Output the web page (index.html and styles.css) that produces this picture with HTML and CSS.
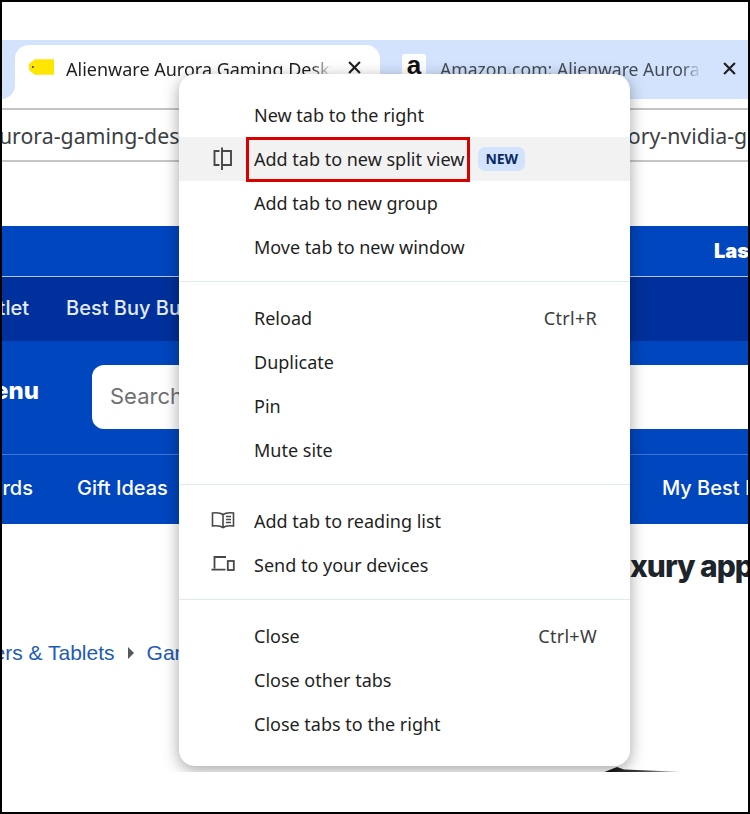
FILE: index.html
```html
<!DOCTYPE html>
<html lang="en">
<head>
<meta charset="utf-8">
<title>Chrome tab context menu</title>
<link rel="stylesheet" href="styles.css">
</head>
<body>
<div class="frame">
  <div class="page">
    <div class="top-gap"></div>
    <div class="tabstrip">
      <div class="tab tab-active">
        <svg class="favicon-tag" viewBox="0 0 26 16"><path d="M6 0H26V16H6L0 11V5Z" fill="#ffe600"/><circle cx="4" cy="8" r="1" fill="#333"/></svg>
        <span class="tab-title">Alienware Aurora Gaming Desktop</span>
        <svg class="tab-close" viewBox="0 0 12 12"><path d="M1 1L11 11M11 1L1 11" stroke="#1f1f1f" stroke-width="2"/></svg>
      </div>
      <div class="tab tab-other">
        <span class="favicon-a">a</span>
        <span class="tab-title tab-title-other">Amazon.com: Alienware Aurora Gaming</span>
        <svg class="tab-close" viewBox="0 0 12 12"><path d="M1 1L11 11M11 1L1 11" stroke="#1f1f1f" stroke-width="2"/></svg>
      </div>
    </div>
    <div class="omni-gap"></div>
    <div class="urlbar">
      <span class="url-left">aurora-gaming-des</span>
      <span class="url-right">ory-nvidia-geforce</span>
    </div>
    <div class="site-gap"></div>
    <div class="promo">
      <span class="promo-text">Last</span>
    </div>
    <div class="subnav">
      <span class="subnav-a">Outlet</span>
      <span class="subnav-b">Best Buy Business</span>
    </div>
    <div class="searchrow">
      <span class="menu-word">Menu</span>
      <div class="searchbox">Search Best Buy</div>
    </div>
    <div class="mainnav">
      <span class="nav-a">Cards</span>
      <span class="nav-b">Gift Ideas</span>
      <span class="nav-c">My Best Buy</span>
    </div>
    <div class="content">
      <div class="headline">xury app</div>
      <div class="crumbs">
        <span>Computers &amp; Tablets</span>
        <svg class="crumb-arrow" viewBox="0 0 6 12"><path d="M0 0L6 6L0 12Z" fill="#55585c"/></svg>
        <span>Gaming</span>
      </div>
      <svg class="product" viewBox="0 0 92 6">
        <defs>
          <linearGradient id="productFade" x1="0" x2="1" y1="0" y2="0">
            <stop offset="0" stop-color="#0d0d0d"/>
            <stop offset="0.45" stop-color="#444"/>
            <stop offset="1" stop-color="#e0e0e0"/>
          </linearGradient>
        </defs>
        <path d="M2 6L12 2L17 0L24 2.500L50 3.500L92 5.500V6Z" fill="url(#productFade)"/>
      </svg>
    </div>

    <div class="menu">
      <div class="group">
        <div class="row"><span class="label">New tab to the right</span></div>
        <div class="row row-hover">
          <svg class="icon" viewBox="0 0 20 24"><path d="M6.500 4H1.500V18H6.500M9 4H18V18H9M9 0.500V23" fill="none" stroke="#474747" stroke-width="1.900"/></svg>
          <span class="label">Add tab to new split view</span>
          <span class="badge">NEW</span>
          <span class="redbox"></span>
        </div>
        <div class="row"><span class="label">Add tab to new group</span></div>
        <div class="row"><span class="label">Move tab to new window</span></div>
      </div>
      <div class="sep"></div>
      <div class="group">
        <div class="row"><span class="label">Reload</span><span class="key">Ctrl+R</span></div>
        <div class="row"><span class="label">Duplicate</span></div>
        <div class="row"><span class="label">Pin</span></div>
        <div class="row"><span class="label">Mute site</span></div>
      </div>
      <div class="sep"></div>
      <div class="group">
        <div class="row">
          <svg class="icon icon-wide" viewBox="0 0 24 18"><path d="M12 3.500C10 2 6 1.500 1.500 2V15C6 14.500 10 15 12 16.500C14 15 18 14.500 22.500 15V2C18 1.500 14 2 12 3.500V16.500M15 5.500H20M15 8.500H20M15 11.500H20" fill="none" stroke="#474747" stroke-width="1.600"/></svg>
          <span class="label">Add tab to reading list</span>
        </div>
        <div class="row">
          <svg class="icon icon-wide" viewBox="0 0 24 18"><path d="M15 2H3.500V13.500M0.500 14.700H14.500" fill="none" stroke="#474747" stroke-width="1.800"/><rect x="16.800" y="6" width="6" height="9" fill="none" stroke="#474747" stroke-width="1.800"/></svg>
          <span class="label">Send to your devices</span>
        </div>
      </div>
      <div class="sep"></div>
      <div class="group">
        <div class="row"><span class="label">Close</span><span class="key">Ctrl+W</span></div>
        <div class="row"><span class="label">Close other tabs</span></div>
        <div class="row"><span class="label">Close tabs to the right</span></div>
      </div>
    </div>
  </div>
</div>
</body>
</html>
```
FILE: styles.css
```css
* { box-sizing: border-box; }
html, body { margin: 0; padding: 0; background: #fff; }
.frame {
  width: 750px;
  height: 814px;
  border: 2px solid #000;
  background: #fff;
}
.page {
  position: relative;
  height: 770px;
  overflow: hidden;
  font-family: Inter, "Liberation Sans", sans-serif;
}
.top-gap { height: 38px; }
.tabstrip {
  height: 59px;
  background: #d3e3fd;
  display: flex;
  align-items: flex-end;
  padding-left: 13px;
}
.tab {
  height: 54px;
  display: flex;
  align-items: flex-start;
  font-family: "Noto Sans", sans-serif;
  font-size: 18px;
  color: #1f1f1f;
  flex: none;
}
.tab-active {
  position: relative;
  width: 365px;
  background: #fff;
  border-radius: 14px 14px 0 0;
  padding: 14px 0 0 14px;
}
.tab-active::before {
  content: "";
  position: absolute;
  left: -14px;
  bottom: 0;
  width: 14px;
  height: 14px;
  background: radial-gradient(circle at 0 0, transparent 13.500px, #fff 14.500px);
}
.tab-other {
  width: 356px;
  padding: 9px 0 0 22px;
}
.favicon-tag { width: 25px; height: 16px; flex: none; }
.tab-title {
  flex: none;
  width: 266px;
  margin-left: 12px;
  white-space: nowrap;
  overflow: hidden;
  line-height: 20px;
  -webkit-mask-image: linear-gradient(to right, #000 92%, transparent);
  mask-image: linear-gradient(to right, #000 92%, transparent);
}
.tab-title-other {
  width: 262px;
  margin-left: 14px;
  margin-top: 5px;
  font-size: 17.600px;
  color: #444b55;
}
.tab-close { width: 13px; height: 13px; flex: none; margin: 2px 0 0 16px; }
.tab-other .tab-close { margin: 8px 0 0 21px; }
.favicon-a {
  width: 24px;
  height: 26px;
  background: #fff;
  border-radius: 3px;
  flex: none;
  text-align: center;
  font-family: "Liberation Sans", sans-serif;
  font-weight: 700;
  font-size: 26px;
  line-height: 22px;
  color: #111;
}
.omni-gap { height: 11px; border-bottom: 2px solid #c4c4c4; }
.urlbar {
  height: 52px;
  border-bottom: 2px solid #c6c6c6;
  display: flex;
  justify-content: space-between;
  align-items: center;
  overflow: hidden;
  font-family: "Noto Sans", sans-serif;
  font-size: 21.300px;
  color: #3c4043;
  white-space: nowrap;
}
.url-left { margin-left: -15px; }
.url-right { margin-right: -62px; }
.site-gap { height: 64px; }
.promo {
  height: 51px;
  background: #0046be;
  border-bottom: 1px solid #b5c6e8;
  display: flex;
  align-items: center;
  color: #fff;
  font-weight: 900;
  font-size: 20px;
  overflow: hidden;
}
.promo-text { margin-left: 712px; }
.subnav {
  height: 64px;
  padding-bottom: 2px;
  background: #00309b;
  display: flex;
  align-items: center;
  color: #e4ebf8;
  font-size: 20px;
  font-weight: 500;
  overflow: hidden;
  white-space: nowrap;
}
.subnav-a { width: 27px; flex: none; direction: rtl; overflow: hidden; }
.subnav-b { margin-left: 37px; flex: none; }
.searchrow {
  height: 114px;
  background: #0046be;
  border-bottom: 1px solid #3f75d8;
  display: flex;
  align-items: flex-start;
  color: #fff;
  overflow: hidden;
}
.menu-word {
  width: 37px;
  flex: none;
  direction: rtl;
  overflow: hidden;
  font-size: 24px;
  font-weight: 800;
  margin-top: 35px;
  line-height: 30px;
}
.searchbox {
  flex: none;
  width: 700px;
  height: 64px;
  margin: 24px 0 0 53px;
  background: #fff;
  border-radius: 12px;
  color: #707070;
  font-size: 22px;
  line-height: 62px;
  padding-left: 18px;
}
.mainnav {
  height: 69px;
  padding-bottom: 3px;
  background: #0046be;
  display: flex;
  align-items: center;
  color: #fff;
  font-size: 20px;
  font-weight: 500;
  overflow: hidden;
  white-space: nowrap;
}
.nav-a { width: 31px; flex: none; direction: rtl; overflow: hidden; }
.nav-b { margin-left: 44px; flex: none; }
.nav-c { margin-left: 494px; flex: none; }
.content { position: relative; height: 249px; overflow: hidden; }
.headline {
  margin: 24px 0 0 628px;
  font-size: 30px;
  font-weight: 800;
  letter-spacing: -1px;
  line-height: 36px;
  color: #1d252c;
  white-space: nowrap;
}
.crumbs {
  display: flex;
  align-items: center;
  gap: 13px;
  margin: 57px 0 0 -82px;
  font-family: "Liberation Sans", sans-serif;
  font-size: 21px;
  color: #1d5bb5;
  white-space: nowrap;
}
.crumb-arrow { width: 6px; height: 12px; flex: none; }
.product {
  position: absolute;
  left: 598px;
  bottom: 0;
  width: 92px;
  height: 6px;
}
.menu {
  position: absolute;
  left: 177px;
  top: 72px;
  width: 451px;
  height: 692px;
  padding: 19px 0 20px;
  background: #fff;
  border-radius: 16px;
  box-shadow: 0 4px 16px rgba(0, 0, 0, 0.36);
  font-family: "Noto Sans", sans-serif;
  font-size: 18px;
  color: #1f1f1f;
}
.row {
  position: relative;
  height: 44px;
  display: flex;
  align-items: center;
  padding: 0 33px 0 75px;
}
.row-hover { background: #f2f2f2; }
.label { white-space: nowrap; }
.key { margin-left: auto; color: #3c3c3c; letter-spacing: 0.3px; }
.icon {
  position: absolute;
  left: 34px;
  top: 10px;
  width: 20px;
  height: 24px;
}
.icon-wide { left: 32px; top: 12px; width: 24px; height: 18px; }
.badge {
  margin-left: 14px;
  padding: 0 7px;
  height: 24px;
  line-height: 24px;
  background: #d3e3fd;
  border-radius: 7px;
  font-size: 14px;
  font-weight: 700;
  color: #0a2a66;
}
.redbox {
  position: absolute;
  left: 67px;
  top: 0;
  width: 224px;
  height: 45px;
  border: 3px solid #d90000;
}
.sep { height: 1px; margin: 12px 0 14px; background: #e3e8f5; }
```
